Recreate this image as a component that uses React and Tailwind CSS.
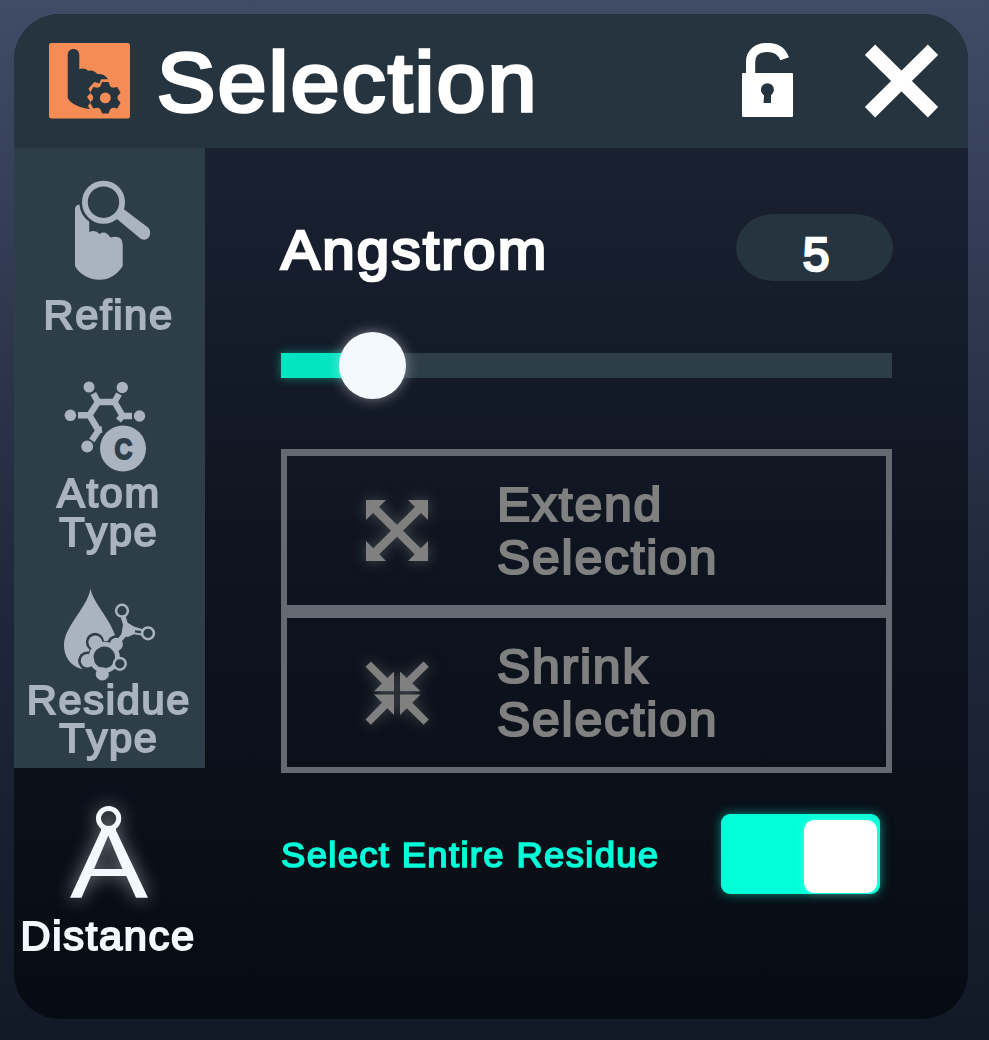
import React from "react";

const LABEL =
  "block scale-x-[1.04] pr-[2px] text-[40px] leading-[38.5px] tracking-[1.6px] text-center [-webkit-text-stroke:1.9px_currentColor]";

function LogoIcon() {
  return (
    <svg className="h-[76px] w-[81px] shrink-0" viewBox="49 43 81 76">
      <rect x="49" y="43" width="81" height="75.5" rx="2.5" fill="#f58c56" />
      <path
        d="M67.7 55 C67.7 47 79.3 47 79.3 55 V69.3 Q84 67 88.3 70.8 Q93.5 69.3 97.3 74 Q104 73.2 108.2 79.3 H101 L99.5 83.5 L94.5 82 L88.5 88.5 L90.5 93 L87 97 L90.5 102 L88 106 L90 109 C79 108 70 103 67.7 98 Z"
        fill="#25343e"
      />
      <g fill="#25343e">
        <circle cx="105.3" cy="97.7" r="12.3" />
        {[0, 60, 120, 180, 240, 300].map((a) => (
          <path
            key={a}
            d="M99.8 88 L102 82 H108.6 L110.8 88 Z"
            transform={`rotate(${a} 105.3 97.7)`}
          />
        ))}
      </g>
      <circle cx="105.3" cy="97.9" r="5.4" fill="#f58c56" />
    </svg>
  );
}

function LockIcon() {
  return (
    <svg className="h-[76px] w-[52px]" viewBox="742 43 52 76">
      <path
        d="M750.6 75 V62 C750.6 52.5 758 47.5 767.3 47.5 C776 47.5 782 51.5 784.6 58.8"
        fill="none"
        stroke="#fff"
        strokeWidth="9.2"
      />
      <rect x="742" y="73" width="51" height="44" rx="1" fill="#fff" />
      <circle cx="767.4" cy="89.7" r="6.5" fill="#25343e" />
      <path d="M764.2 92 H771 V103 H763.6 Z" fill="#25343e" />
    </svg>
  );
}

function CloseIcon() {
  return (
    <svg className="h-[76px] w-[76px]" viewBox="864 43 76 76">
      <path d="M870 49.8 L933 112.2 M933 49.8 L870 112.2" stroke="#fff" strokeWidth="14.6" />
    </svg>
  );
}

function RefineIcon() {
  return (
    <svg className="h-[147.5px] w-[191px]" viewBox="14 148 191 147.5" fill="#a9b4c0">
      <path d="M75 209 Q75 205 79.5 204.5 C80 212 84 218 89.2 221.5 V232 Q95 229 99.7 234 Q105 230 110.5 237.5 Q122.7 234.5 122.7 245 V266 C117 275 109 279.8 99.5 279.8 C90 279.8 80 275 75 266 Z" />
      <circle cx="103.5" cy="202.2" r="18.6" fill="none" stroke="#a9b4c0" strokeWidth="5.8" />
      <path d="M121.5 207.5 L148 227.5 Q151.5 231 149.5 236 Q146.5 241.5 141 239 L114.5 217 Z" />
    </svg>
  );
}

function AtomIcon() {
  return (
    <svg className="h-[119px] w-[191px]" viewBox="14 355 191 119" fill="#a9b4c0">
      <circle cx="89" cy="387" r="5.5" />
      <circle cx="122.3" cy="387.5" r="5.7" />
      <circle cx="70.4" cy="415.3" r="5.8" />
      <circle cx="139.5" cy="416" r="5.7" />
      <circle cx="87.2" cy="446.5" r="5.9" />
      <path
        d="M93.3 393.5 L98 402 H114.5 L119 394 M98 402 L89.3 415.2 H78 M89.3 415.2 L98.5 430.5 L91.8 440.5 M98 430 L102 429.5 M114.5 402 L122.7 416 H132 M122.7 415.5 L118.5 420.5"
        fill="none"
        stroke="#a9b4c0"
        strokeWidth="6.4"
        strokeLinejoin="round"
      />
      <circle cx="123" cy="448.6" r="23" />
      <text
        x="0"
        y="0"
        transform="translate(123.4 459.2) scale(.84 1)"
        textAnchor="middle"
        fontSize="29.5"
        fontWeight="700"
        letterSpacing="0"
        fill="#2e3e48"
        stroke="#2e3e48"
        strokeWidth="1.8"
      >
        C
      </text>
    </svg>
  );
}

function ResidueIcon() {
  return (
    <svg className="h-[119px] w-[191px]" viewBox="14 561.5 191 119" fill="#a9b4c0">
      <path d="M90.5 588.3 C93 602 109 617 115 634.5 L104 650 L81.5 668.5 C70 665 64 656 64 644.5 C64 626 87 608 90.5 588.3 Z" />
      <g fill="#2e3e48">
        <circle cx="104" cy="657" r="16.5" />
        <circle cx="95" cy="641.5" r="9.2" />
        <circle cx="87.3" cy="660.3" r="9.2" />
        <circle cx="116" cy="643.5" r="8.8" />
      </g>
      <circle cx="104.3" cy="656.8" r="13.2" fill="none" stroke="#a9b4c0" strokeWidth="4.8" />
      <circle cx="95.3" cy="641.8" r="6.9" />
      <circle cx="87.5" cy="660.3" r="6.8" />
      <circle cx="102.3" cy="673.4" r="6.6" />
      <circle cx="116.3" cy="643.8" r="6.6" />
      <path
        d="M117 643 L127.5 630 L123.2 616.5"
        fill="none"
        stroke="#a9b4c0"
        strokeWidth="5"
        strokeLinejoin="round"
      />
      <path d="M123 624 L128 622.5 L134 626 L142 628.5 V630.4 L135 629.8 V632 L142 633 V635 L134 633.7 L128 636.4 L121 635.5 Z" />
      <g fill="#2e3e48" stroke="#a9b4c0" strokeWidth="2.5">
        <circle cx="122" cy="610.2" r="5.9" />
        <circle cx="148" cy="632.8" r="5.9" />
        <circle cx="119.8" cy="663.3" r="5.9" />
      </g>
    </svg>
  );
}

function DistanceIcon() {
  return (
    <svg
      className="h-[149px] w-[191px] drop-shadow-[0_0_9px_rgba(244,248,255,0.5)]"
      viewBox="14 768 191 149"
      fill="#f4f8ff"
    >
      <circle cx="108.6" cy="818.5" r="10.1" fill="none" stroke="#f4f8ff" strokeWidth="5" />
      <path
        fillRule="evenodd"
        d="M101 828 Q108.5 833 116 828 V830.5 L148 897.8 H136 L126.3 876 H91 L81.5 897.8 H70 L101 830.5 Z M108.3 835.5 L94 869 H122.5 Z"
      />
    </svg>
  );
}

const ICON_GLOW = "h-[106px] w-[128px] shrink-0 drop-shadow-[0_0_7px_rgba(128,128,128,0.5)]";

function ExtendIcon() {
  return (
    <svg className={ICON_GLOW} viewBox="333 478 128 106" fill="#808080">
      <path d="M371 505 L423 556.5 M423 505 L371 556.5" stroke="#808080" strokeWidth="8.4" />
      <path d="M366 500 H386 L366 520 Z M428 500 V520 L408 500 Z M366 561 V541 L386 561 Z M428 561 H408 L428 541 Z" />
    </svg>
  );
}

function ShrinkIcon() {
  return (
    <svg className={ICON_GLOW} viewBox="333 639.5 128 106" fill="#808080">
      <path
        d="M368.2 663.6 L387 682.5 M426.2 663.6 L407 682.5 M368.2 721.6 L387 702.5 M426.2 721.6 L407 702.5"
        stroke="#808080"
        strokeWidth="7.6"
      />
      <path d="M394 671 V690.8 H374 Z M400 671 V690.8 H420.5 Z M394 714.5 V694 H374 Z M400 714.5 V694 H420.5 Z" />
    </svg>
  );
}

function Tab({ size, icon, label, active }) {
  return (
    <button
      className={`flex flex-col items-center ${size} ${
        active ? "text-[#f4f8ff]" : "bg-[#2e3e48] text-[#a9b4c0]"
      }`}
    >
      {icon}
      <span className={LABEL}>
        {label.map((l) => (
          <span key={l} className="block">
            {l}
          </span>
        ))}
      </span>
    </button>
  );
}

function Action({ icon, first, second }) {
  return (
    <button className="flex h-[162px] w-full items-center border-x-[6px] border-t-[7px] border-b-[6px] border-[#656972] pl-[46px] text-left text-[#808080]">
      {icon}
      <span className="ml-[35.5px] origin-left scale-x-[1.04] text-[48px] leading-[53px] tracking-[1.7px] [-webkit-text-stroke:2.1px_currentColor]">
        <span className="block">{first}</span>
        <span className="block">{second}</span>
      </span>
    </button>
  );
}

export default function App() {
  return (
    <div className="h-[1040px] w-[989px] bg-linear-to-b from-[#404b66] via-[#1f273b] via-58% to-[#121926] p-[14px] font-['Liberation_Sans',Arial,sans-serif] [font-kerning:none]">
      <div className="flex h-[1004.5px] w-[954px] flex-col overflow-hidden rounded-[46px] bg-linear-to-b from-[#1e2538] via-[#0f1520] via-52% to-[#070b13]">
        <header className="flex h-[134px] shrink-0 items-center bg-[#25343e] pl-[35px]">
          <LogoIcon />
          <h1 className="ml-[26.5px] origin-left scale-x-[1.04] pt-px text-[84px] leading-[134px] tracking-[2.4px] text-white [-webkit-text-stroke:3.6px_white]">
            Selection
          </h1>
          <div className="ml-auto flex gap-[70px] pr-[28px]">
            <button aria-label="Unlock">
              <LockIcon />
            </button>
            <button aria-label="Close">
              <CloseIcon />
            </button>
          </div>
        </header>

        <div className="flex grow">
          <nav className="flex w-[191px] shrink-0 flex-col">
            <Tab size="h-[207px]" icon={<RefineIcon />} label={["Refine"]} />
            <Tab size="h-[206.5px]" icon={<AtomIcon />} label={["Atom", "Type"]} />
            <Tab size="h-[206.5px]" icon={<ResidueIcon />} label={["Residue", "Type"]} />
            <Tab size="h-[207px]" icon={<DistanceIcon />} label={["Distance"]} active />
          </nav>

          <main className="flex grow flex-col pt-[66px] pr-[76px] pl-[76px]">
            <div className="flex h-[67px] items-center justify-between">
              <h2 className="origin-left scale-x-[1.04] pt-[4px] text-[56px] leading-[60px] tracking-[2.2px] text-white [-webkit-text-stroke:2.7px_white]">
                Angstrom
              </h2>
              <div className="-mr-px flex h-[67px] w-[157px] items-center justify-center rounded-[38px/33.5px] bg-[#25343e] pt-[14px] pl-[3px] text-[48px] leading-[54px] text-white [-webkit-text-stroke:2.6px_white]">
                5
              </div>
            </div>

            <div className="mt-[72px] flex h-[25px] items-center bg-[#2e3e48]">
              <div className="h-full w-[91px] bg-[#00e5c0] shadow-[0_0_10px_rgba(0,229,192,0.5)]" />
              <div className="-ml-[33px] size-[67px] shrink-0 rounded-full bg-[#f4f8ff] shadow-[0_0_14px_rgba(244,248,255,0.45)]" />
            </div>

            <div className="mt-[71px] flex flex-col">
              <Action icon={<ExtendIcon />} first="Extend" second="Selection" />
              <Action icon={<ShrinkIcon />} first="Shrink" second="Selection" />
            </div>

            <div className="mt-[41px] flex h-[80px] items-center justify-between pr-[12px]">
              <span className="origin-left scale-x-[1.04] pt-[2px] text-[35px] tracking-[1.3px] whitespace-nowrap text-[#00ffd9] [-webkit-text-stroke:1.6px_currentColor]">
                Select Entire Residue
              </span>
              <button
                aria-label="Select Entire Residue"
                className="flex h-[80px] w-[159px] justify-end rounded-[9px] bg-[#00ffd9] pt-[6px] pr-[3px] shadow-[0_0_11px_rgba(0,255,217,0.5)]"
              >
                <span className="size-[73px] rounded-[10px] bg-white shadow-[0_0_9px_rgba(255,255,255,0.25)]" />
              </button>
            </div>
          </main>
        </div>
      </div>
    </div>
  );
}
